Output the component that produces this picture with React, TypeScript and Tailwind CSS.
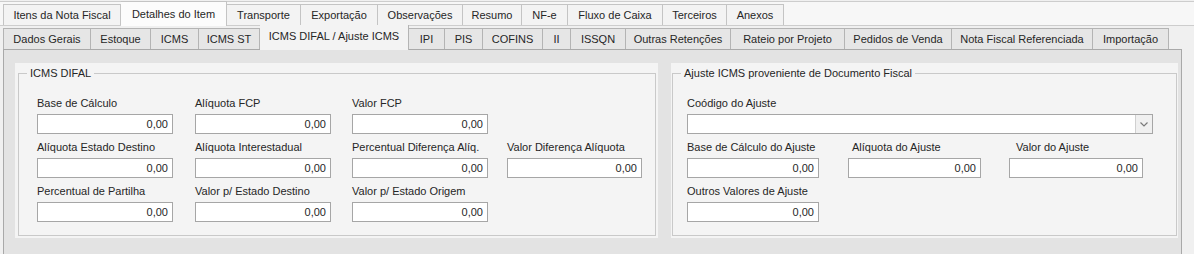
import React from 'react';

type Tab = { label: string; w: number; active?: boolean };

const mainTabs: Tab[] = [
  { label: 'Itens da Nota Fiscal', w: 118 },
  { label: 'Detalhes do Item', w: 106, active: true },
  { label: 'Transporte', w: 74 },
  { label: 'Exportação', w: 77 },
  { label: 'Observações', w: 85 },
  { label: 'Resumo', w: 59 },
  { label: 'NF-e', w: 46 },
  { label: 'Fluxo de Caixa', w: 95 },
  { label: 'Terceiros', w: 64 },
  { label: 'Anexos', w: 57 },
];

const subTabs: Tab[] = [
  { label: 'Dados Gerais', w: 88 },
  { label: 'Estoque', w: 60 },
  { label: 'ICMS', w: 48 },
  { label: 'ICMS ST', w: 61 },
  { label: 'ICMS DIFAL / Ajuste ICMS', w: 149, active: true },
  { label: 'IPI', w: 36 },
  { label: 'PIS', w: 38 },
  { label: 'COFINS', w: 60 },
  { label: 'II', w: 28 },
  { label: 'ISSQN', w: 55 },
  { label: 'Outras Retenções', w: 105 },
  { label: 'Rateio por Projeto', w: 114 },
  { label: 'Pedidos de Venda', w: 107 },
  { label: 'Nota Fiscal Referenciada', w: 141 },
  { label: 'Importação', w: 76 },
];

// numeric text box, right aligned like the delphi edits
const NumberBox: React.FC<{ w: number }> = ({ w }) => (
  <div
    className="h-[20px] bg-white border border-[#a6a6a6] flex items-center justify-end pr-[4px] leading-[14px]"
    style={{ width: w }}
  >
    0,00
  </div>
);

const Field: React.FC<{ label: string; w: number; indent?: number }> = ({ label, w, indent = 0 }) => (
  <div className="flex flex-col">
    <div className="h-[14px] leading-[14px] whitespace-nowrap" style={{ marginLeft: indent }}>
      {label}
    </div>
    <div className="mt-[4px]">
      <NumberBox w={w} />
    </div>
  </div>
);

const App: React.FC = () => {
  return (
    <div className="w-[1194px] h-[254px] overflow-hidden bg-[#f0f0f0] text-[11px] text-[#262626] font-['Liberation_Sans',Arial,sans-serif]">
      {/* Main tab row */}
      <div className="mt-[1px] h-[25px] flex items-end pl-[3px] border-t border-b border-[#cdcdcd] bg-[#f7f7f7]">
        {mainTabs.map((t, i) =>
          t.active ? (
            <div
              key={t.label}
              className="h-[25px] mb-[-1px] flex items-center justify-center bg-[#fcfcfc] border-t border-r border-[#c4c4c4] whitespace-nowrap"
              style={{ width: t.w }}
            >
              {t.label}
            </div>
          ) : (
            <div
              key={t.label}
              className={`h-[21px] flex items-center justify-center bg-[#f3f3f3] border-t border-r border-[#c4c4c4] whitespace-nowrap ${i === 0 ? 'border-l' : ''}`}
              style={{ width: t.w }}
            >
              {t.label}
            </div>
          )
        )}
      </div>

      {/* Sub tab row */}
      <div className="h-[23px] flex items-end pl-[3px]">
        {subTabs.map((t, i) =>
          t.active ? (
            <div
              key={t.label}
              className="relative z-10 h-[25px] mb-[-1px] flex items-center justify-center bg-[#f3f3f3] border-r border-[#b4b4b4] whitespace-nowrap pb-[2px]"
              style={{ width: t.w }}
            >
              {t.label}
            </div>
          ) : (
            <div
              key={t.label}
              className={`h-[21px] flex items-center justify-center bg-[#e6e6e6] border-t border-r border-[#b4b4b4] whitespace-nowrap ${i === 0 ? 'border-l' : ''}`}
              style={{ width: t.w }}
            >
              {t.label}
            </div>
          )
        )}
      </div>

      {/* Page content */}
      <div className="ml-[3px] w-[1179px] h-[206px] bg-[#e3e3e3] border-t border-l border-r border-[#a9a9a9] flex gap-[13px] pl-[11px] pt-[13px]">
        {/* ICMS DIFAL */}
        <div className="w-[643px] h-[175px] bg-[#f4f4f4] pt-[3px] pl-[3px] pr-[2px] pb-[2px]">
          <fieldset className="h-full border border-[#c9c9c9] pl-[18px] pt-[16px]">
            <legend className="ml-[-10px] px-[3px] leading-[14px]">ICMS DIFAL</legend>
            <div className="grid grid-cols-[158px_157px_155px_136px] gap-y-[6px]">
              <Field label="Base de Cálculo" w={136} />
              <Field label="Alíquota FCP" w={136} />
              <Field label="Valor FCP" w={136} />
              <div />
              <Field label="Alíquota Estado Destino" w={136} />
              <Field label="Alíquota Interestadual" w={136} />
              <Field label="Percentual Diferença Alíq." w={136} />
              <Field label="Valor Diferença Alíquota" w={135} />
              <Field label="Percentual de Partilha" w={136} />
              <Field label="Valor p/ Estado Destino" w={136} />
              <Field label="Valor p/ Estado Origem" w={136} />
            </div>
          </fieldset>
        </div>

        {/* Ajuste ICMS */}
        <div className="w-[507px] h-[175px] bg-[#f4f4f4] pt-[3px] px-[1px] pb-[2px]">
          <fieldset className="h-full border border-[#c9c9c9] pl-[14px] pt-[16px]">
            <legend className="ml-[-6px] px-[3px] leading-[14px]">Ajuste ICMS proveniente de Documento Fiscal</legend>
            <div className="flex flex-col gap-y-[6px]">
              <div className="flex flex-col">
                <div className="h-[14px] leading-[14px]">Coódigo do Ajuste</div>
                <div className="mt-[4px] w-[466px] h-[20px] bg-white border border-[#a6a6a6] flex justify-end">
                  <div className="w-[17px] h-full bg-[#f0f0f0] border-l border-[#d0d0d0] flex items-center justify-center">
                    <svg width="8" height="5" viewBox="0 0 8 5">
                      <path d="M0.5 0.5 L4 4 L7.5 0.5" fill="none" stroke="#7a7a7a" strokeWidth="1.2" />
                    </svg>
                  </div>
                </div>
              </div>
              <div className="grid grid-cols-[161px_161px_161px]">
                <Field label="Base de Cálculo do Ajuste" w={132} />
                <Field label="Alíquota do Ajuste" w={133} indent={4} />
                <Field label="Valor do Ajuste" w={134} indent={7} />
              </div>
              <Field label="Outros Valores de Ajuste" w={132} />
            </div>
          </fieldset>
        </div>
      </div>
    </div>
  );
};

export default App;
